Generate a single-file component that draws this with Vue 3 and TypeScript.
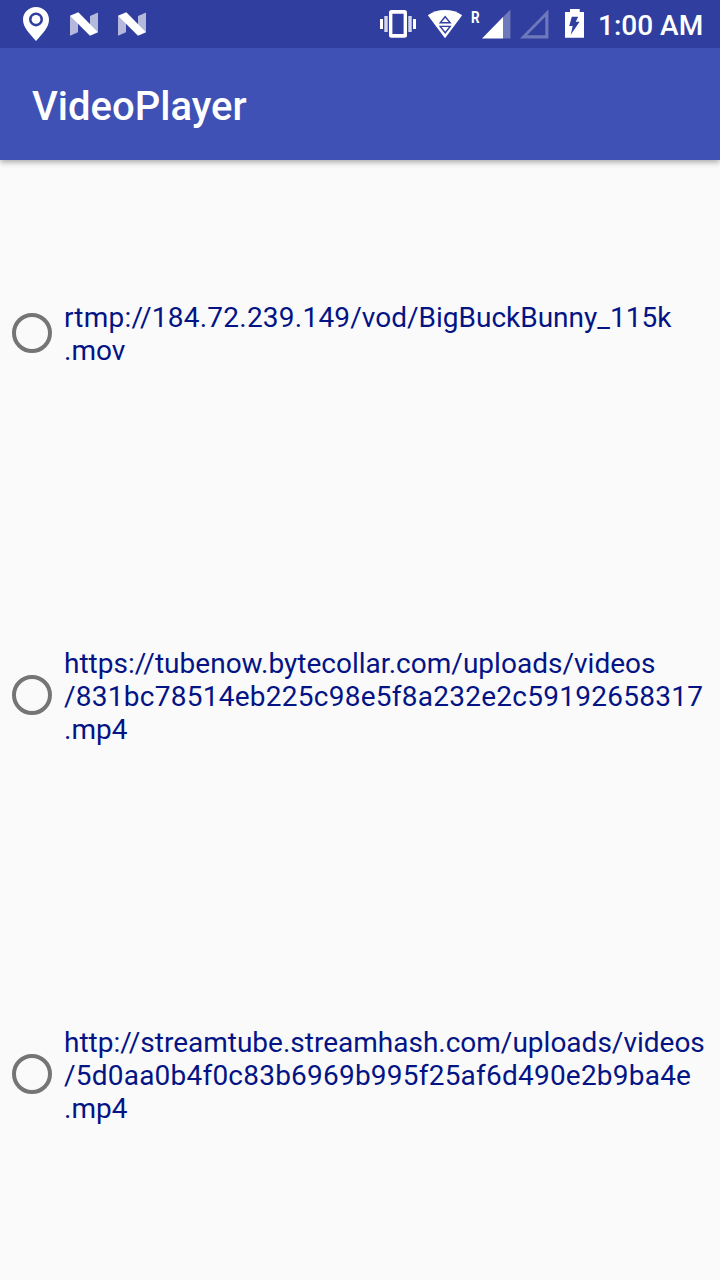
<script setup lang="ts">
import { ref } from 'vue'

interface Segment {
  text: string
  spacing: number
}

interface Video {
  id: number
  lines: Segment[][]
}

const videos: Video[] = [
  {
    id: 1,
    lines: [
      [
        { text: 'rtmp://', spacing: 0.2 },
        { text: '184.72.239.149', spacing: 0.23 },
        { text: '/vod/BigBuckBunny_115k', spacing: 0 },
      ],
      [{ text: '.mov', spacing: 0 }],
    ],
  },
  {
    id: 2,
    lines: [
      [{ text: 'https://tubenow.bytecollar.com/uploads/videos', spacing: 0.02 }],
      [{ text: '/831bc78514eb225c98e5f8a232e2c59192658317', spacing: 0.26 }],
      [{ text: '.mp4', spacing: 0 }],
    ],
  },
  {
    id: 3,
    lines: [
      [{ text: 'http://streamtube.streamhash.com/uploads/videos', spacing: 0 }],
      [{ text: '/5d0aa0b4f0c83b6969b995f25af6d490e2b9ba4e', spacing: 0.22 }],
      [{ text: '.mp4', spacing: 0 }],
    ],
  },
]

const selected = ref<number | null>(null)
</script>

<template>
  <div class="screen">
    <header class="status">
      <div class="notifications">
        <svg class="pin" width="28" height="48" viewBox="22 0 28 48">
          <path fill="#fff" fill-rule="evenodd" d="M36 7C28.8 7 23 12.6 23 19.7C23 27.5 30 34 36 41C42 34 49 27.5 49 19.7C49 12.6 43.2 7 36 7ZM36 12.4A7 7 0 1 1 36 26.4A7 7 0 1 1 36 12.4Z" />
          <circle cx="36" cy="19.4" r="4.4" fill="#fff" />
        </svg>
        <svg v-for="n in 2" :key="n" class="nougat" width="28" height="48" viewBox="70 0 28 48">
          <path fill="#fff" fill-opacity=".64" d="M70 15.5L78 22V32.3L70 35.8ZM98 12.5V32.5L90 25V16Z" />
          <path fill="#fff" d="M70 15.7L78.3 12.2L98 32.2L90 35.8Z" />
        </svg>
      </div>
      <div class="system">
        <svg width="36" height="48" viewBox="380 0 36 48">
          <path fill="#fff" fill-rule="evenodd" d="M391.5 10H404.5Q407 10 407 12.5V35.3Q407 37.8 404.5 37.8H391.5Q389 37.8 389 35.3V12.5Q389 10 391.5 10ZM392.4 13.8V34H403.6V13.8Z" />
          <path fill="#fff" d="M380 19H383V29H380ZM413 19H416V29H413Z" />
          <path fill="#fff" fill-opacity=".8" d="M384.3 16H387.7V32H384.3ZM408.3 16H411.7V32H408.3Z" />
        </svg>
        <svg class="wifi" width="36" height="48" viewBox="427 0 36 48">
          <path fill="#fff" d="M427.8 15.3Q435 9.9 445 9.9Q455 9.9 462.2 15.3L445 38.2Z" />
          <path fill="none" stroke="#303f9f" stroke-width="1.4" d="M445.2 16.7L450.2 22.8H440.2ZM445.2 32.8L440.2 26.4H450.2Z" />
        </svg>
        <span class="roaming">R</span>
        <svg class="signal" width="29" height="48" viewBox="482 0 29 48">
          <path fill="#fff" fill-opacity=".3" d="M510.4 9.6V38.4H503V17Z" />
          <path fill="#fff" d="M482 38.4L503 17.1V38.4Z" />
        </svg>
        <svg class="signal-empty" width="29" height="48" viewBox="520 0 29 48">
          <path fill="#fff" fill-opacity=".3" fill-rule="evenodd" d="M520 38.4L548.4 9.6V38.4ZM527 35.2H545.3V16.8Z" />
        </svg>
        <svg class="battery" width="19" height="48" viewBox="565 0 19 48">
          <path fill="#fff" fill-rule="evenodd" d="M570 9H579.7V12H584V37.8H565V12H570ZM571.8 16.7L569.2 26H572.7L570.7 34.8L579.6 21.7H575.7L578.2 16.7Z" />
        </svg>
        <span class="clock">1:00 AM</span>
      </div>
    </header>

    <div class="toolbar">
      <h1>VideoPlayer</h1>
    </div>

    <main class="list" role="radiogroup">
      <div
        v-for="video in videos"
        :key="video.id"
        class="option"
        role="radio"
        :aria-checked="selected === video.id"
        @click="selected = video.id"
      >
        <span class="ring"><span v-if="selected === video.id" class="dot"></span></span>
        <div class="url">
          <div v-for="(line, i) in video.lines" :key="i">
            <span
              v-for="segment in line"
              :key="segment.text"
              :style="{ letterSpacing: segment.spacing + 'px' }"
            >{{ segment.text }}</span>
          </div>
        </div>
      </div>
    </main>
  </div>
</template>

<style>
body {
  margin: 0;
  background: #fafafa;
}
</style>

<style scoped>
.screen {
  width: 720px;
  height: 1280px;
  overflow: hidden;
  background: #fafafa;
  font-family: Roboto, sans-serif;
}
.status {
  position: relative;
  z-index: 1;
  height: 48px;
  box-sizing: border-box;
  padding: 0 17px 0 22px;
  display: flex;
  justify-content: space-between;
  background: #303f9f;
  color: #fff;
}
svg {
  display: block;
  flex: none;
}
.notifications {
  display: flex;
  gap: 20px;
}
.system {
  display: flex;
  width: 323px;
}
.wifi {
  margin-left: 11px;
}
.roaming {
  flex: none;
  width: 11px;
  margin-left: 8px;
  font-size: 16px;
  font-weight: 700;
  line-height: 35px;
  transform: scaleX(.84);
  transform-origin: left;
}
.signal-empty {
  margin-left: 9px;
}
.battery {
  margin-left: 16px;
}
.clock {
  margin-left: 14px;
  font-size: 28px;
  font-weight: 500;
  line-height: 52px;
  white-space: nowrap;
}
.toolbar {
  height: 112px;
  padding-left: 32px;
  display: flex;
  align-items: center;
  position: relative;
  background: #3f51b5;
  box-shadow: 0 2px 6px rgba(0, 0, 0, .35);
}
h1 {
  margin: 0;
  font-size: 40px;
  font-weight: 500;
  line-height: 48px;
  padding-top: 6px;
  color: #fff;
}
.option {
  display: flex;
  align-items: center;
  padding: 140px 0 140px 12px;
}
.ring {
  flex: none;
  box-sizing: border-box;
  width: 40px;
  height: 40px;
  border: 4px solid #757575;
  border-radius: 50%;
  display: grid;
  place-items: center;
  margin: 0 12px 1px 0;
}
.dot {
  width: 20px;
  height: 20px;
  border-radius: 50%;
  background: #303f9f;
}
.url {
  padding-top: 1px;
  margin-bottom: -1px;
  font-size: 28px;
  line-height: 33px;
  color: #041485;
  white-space: nowrap;
}
.url > div {
  display: flex;
}
</style>
